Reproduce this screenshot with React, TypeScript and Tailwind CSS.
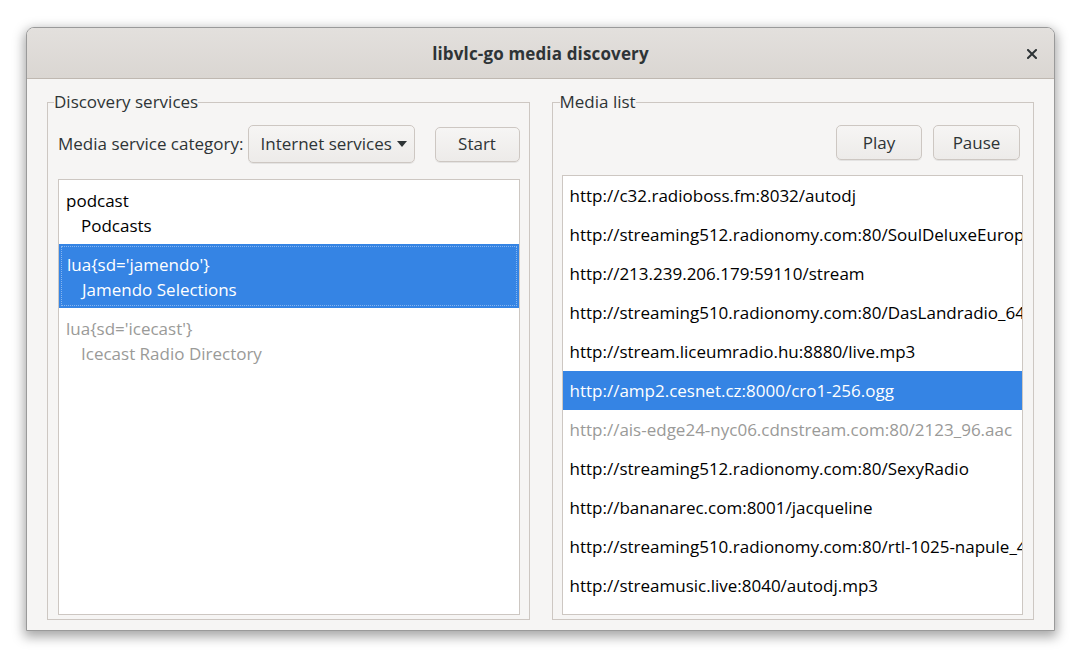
import React from "react";

const FONT = { fontFamily: '"Open Sans", "Noto Sans", "Liberation Sans", sans-serif' };

const urls = [
  "http://c32.radioboss.fm:8032/autodj",
  "http://streaming512.radionomy.com:80/SoulDeluxeEuropeRadio",
  "http://213.239.206.179:59110/stream",
  "http://streaming510.radionomy.com:80/DasLandradio_64",
  "http://stream.liceumradio.hu:8880/live.mp3",
  "http://amp2.cesnet.cz:8000/cro1-256.ogg",
  "http://ais-edge24-nyc06.cdnstream.com:80/2123_96.aac",
  "http://streaming512.radionomy.com:80/SexyRadio",
  "http://bananarec.com:8001/jacqueline",
  "http://streaming510.radionomy.com:80/rtl-1025-napule_44",
  "http://streamusic.live:8040/autodj.mp3",
];

function Button({ children, className }: { children: React.ReactNode; className: string }) {
  return (
    <div
      className={
        "flex items-center justify-center rounded-[5px] border border-[#cdc7c2] bg-gradient-to-b from-[#f6f5f4] to-[#edebe9] text-[#2e3436] shadow-[0_1px_0_rgba(0,0,0,0.07)] " +
        className
      }
    >
      {children}
    </div>
  );
}

export default function App() {
  return (
    <div className="w-[1084px] h-[656px] bg-white pt-[27px] pl-[26px] text-[17px]" style={FONT}>
      <div className="w-[1029px] h-[604px] flex flex-col rounded-t-[8px] border border-[#9a9a9a] bg-[#f6f5f4] shadow-[0_4px_12px_2px_rgba(0,0,0,0.35)] overflow-hidden">
        {/* title bar */}
        <div className="relative h-[51px] shrink-0 flex items-center justify-center bg-gradient-to-b from-[#e3e0dd] to-[#dad6d2] border-b border-[#bfb8b1]">
          <span className="font-bold text-[#2e3436] text-[17px] tracking-[0.15px] pt-[2px]">libvlc-go media discovery</span>
          <svg className="absolute right-[17px] top-[21px]" width="10" height="10" viewBox="0 0 10 10">
            <path d="M1 1 L9 9 M9 1 L1 9" stroke="#2e3436" strokeWidth="2" strokeLinecap="square" />
          </svg>
        </div>
        {/* body */}
        <div className="flex-1 grid grid-cols-2 gap-[22px] pl-[20px] pr-[20px] pt-[13px] pb-[10px]">
          {/* Left frame */}
          <fieldset className="border border-[#cdc7c2] min-w-0 flex flex-col pl-[10px] pr-[9px] pb-[4px] pt-0 m-0">
            <legend className="-ml-[4px] px-0 leading-[20px] text-[#2e3436]">Discovery services</legend>
            <div className="flex items-center mt-[13px] h-[38px]">
              <span className="text-[#2e3436] whitespace-nowrap">Media service category:</span>
              <Button className="ml-[5px] w-[167px] h-[38px] justify-start pl-[11px]">
                <span>Internet services</span>
                <svg className="ml-[5px]" width="10" height="6" viewBox="0 0 10 6">
                  <path d="M0 0 L10 0 L5 6 Z" fill="#2e3436" />
                </svg>
              </Button>
              <Button className="ml-auto w-[85px] h-[35px]">Start</Button>
            </div>
            <div className="mt-[16px] flex-1 border border-[#cdc7c2] bg-white">
              <div className="pt-[8px] pb-[6px] pl-[7px] leading-[25px] text-black">
                <div>podcast</div>
                <div className="pl-[15px]">Podcasts</div>
              </div>
              <div className="bg-[#3584e4] p-[2px]">
                <div className="border border-dotted border-[rgba(255,255,255,0.4)] pt-[5px] pb-[3px] pl-[5px] leading-[25px] text-white">
                  <div>lua{"{"}sd='jamendo'{"}"}</div>
                  <div className="pl-[15px]">Jamendo Selections</div>
                </div>
              </div>
              <div className="pt-[8px] pb-[6px] pl-[7px] leading-[25px] text-[#9a9a98]">
                <div>lua{"{"}sd='icecast'{"}"}</div>
                <div className="pl-[15px]">Icecast Radio Directory</div>
              </div>
            </div>
          </fieldset>
          {/* Right frame */}
          <fieldset className="border border-[#cdc7c2] min-w-0 flex flex-col pl-[9px] pr-[10px] pb-[4px] pt-0 m-0">
            <legend className="-ml-[2px] px-0 leading-[20px] text-[#2e3436]">Media list</legend>
            <div className="flex justify-end gap-[11px] mt-[13px] pr-[3px]">
              <Button className="w-[86px] h-[35px]">Play</Button>
              <Button className="w-[87px] h-[35px]">Pause</Button>
            </div>
            <div className="mt-[15px] flex-1 border border-[#cdc7c2] bg-white overflow-hidden">
              {urls.map((u, i) => (
                <div
                  key={i}
                  className={
                    "h-[39px] flex items-center pl-[7px] pt-[1px] whitespace-nowrap overflow-hidden " +
                    (i === 5 ? "bg-[#3584e4] text-white" : i === 6 ? "text-[#9a9a98]" : "text-black")
                  }
                >
                  {u}
                </div>
              ))}
            </div>
          </fieldset>
        </div>
      </div>
    </div>
  );
}
